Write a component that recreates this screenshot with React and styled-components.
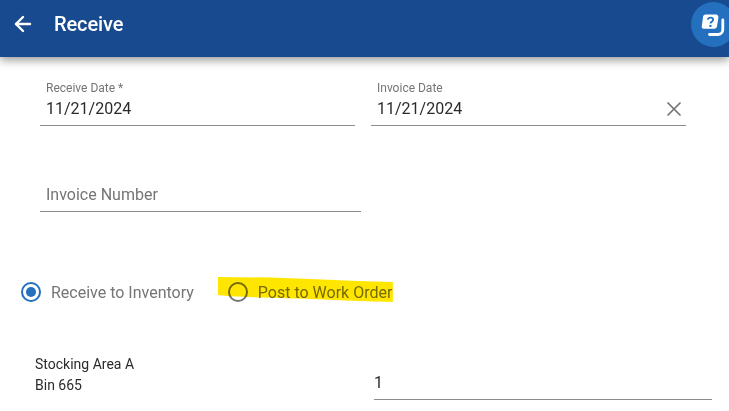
import React from "react";
import styled, { createGlobalStyle } from "styled-components";
import { ArrowLeft, X } from "lucide-react";

const Global = createGlobalStyle`
  html, body { margin: 0; padding: 0; background: #fff; width: 729px; height: 411px; overflow: hidden; }
  * { box-sizing: border-box; }
  body { font-family: Roboto, "Liberation Sans", sans-serif; }
`;

const Page = styled.div`
  width: 729px;
  height: 411px;
  overflow: hidden;
  display: flex;
  flex-direction: column;
`;

const Header = styled.header`
  position: relative;
  flex: none;
  height: 57px;
  background: #174a8f;
  box-shadow: 0 3px 9px rgba(0, 0, 0, 0.42);
  display: flex;
  align-items: center;
  padding: 0 0 9px 11px;
  color: #fff;
`;

const BackIcon = styled(ArrowLeft)`
  width: 24px;
  height: 24px;
  stroke-width: 2.4;
  margin-right: 19px;
`;

const Title = styled.h1`
  margin: 0;
  font-size: 20px;
  font-weight: 500;
  line-height: 24px;
  letter-spacing: -0.1px;
`;

const HelpBubble = styled.div`
  position: absolute;
  left: 691px;
  top: 2px;
  width: 45px;
  height: 45px;
  border-radius: 50%;
  background: #2470bf;
  display: flex;
  align-items: center;
  padding-left: 9px;
`;

const Main = styled.main`
  flex: 1;
  display: flex;
  flex-direction: column;
`;

const DateRow = styled.div`
  display: flex;
  gap: 16px;
  padding: 23px 0 0 40px;
`;

const Field = styled.div`
  position: relative;
  width: ${(p) => p.$width}px;
  height: ${(p) => p.$height || 46}px;
  border-bottom: 1px solid #8c8c8c;
  padding: 0 6px;
  display: flex;
  flex-direction: column;
  justify-content: flex-end;
`;

const SmallLabel = styled.label`
  font-size: 12px;
  line-height: 14px;
  color: #757575;
  margin-bottom: 2px;
`;

const Value = styled.div`
  font-size: 16px;
  line-height: 24px;
  color: #2b2b2b;
  margin-bottom: 4px;
`;

const Placeholder = styled.div`
  font-size: 16px;
  line-height: 24px;
  color: #757575;
  margin-bottom: 4px;
`;

const ClearIcon = styled(X)`
  position: absolute;
  right: 0px;
  bottom: 4px;
  width: 24px;
  height: 24px;
  color: #757575;
  stroke-width: 1.7;
`;

const InvoiceRow = styled.div`
  padding: 40px 0 0 40px;
`;

const RadioRow = styled.div`
  display: flex;
  align-items: center;
  padding: 68px 0 0 21px;
`;

const RadioOption = styled.div`
  position: relative;
  display: flex;
  align-items: center;
  gap: 10px;
  height: 24px;
  margin-right: ${(p) => p.$gap || 0}px;
  font-size: 16px;
  color: #757575;
`;

const RadioCircle = styled.span`
  width: 20px;
  height: 20px;
  border-radius: 50%;
  border: 2px solid ${(p) => (p.$on ? "#2470bf" : "#757575")};
  display: flex;
  align-items: center;
  justify-content: center;
  &::after {
    content: "";
    width: 10px;
    height: 10px;
    border-radius: 50%;
    background: ${(p) => (p.$on ? "#2470bf" : "transparent")};
  }
`;

const Highlight = styled.span`
  position: absolute;
  left: -10px;
  top: -3px;
  width: 175px;
  height: 26px;
  background: #ffe600;
  mix-blend-mode: multiply;
  clip-path: polygon(0 0, 30% 2%, 53% 8%, 80% 15%, 100% 19%, 100% 96%, 80% 92%, 53% 85%, 30% 80%, 7% 74%, 0 69%);
`;

const StockRow = styled.div`
  display: flex;
  padding: 50px 0 0 35px;
`;

const StockInfo = styled.div`
  width: 339px;
  font-size: 14px;
  line-height: 21px;
  color: #2b2b2b;
`;

const QtyField = styled.div`
  width: 338px;
  height: 46px;
  border-bottom: 1px solid #8c8c8c;
  font-size: 16px;
  line-height: 24px;
  color: #2b2b2b;
  display: flex;
  align-items: flex-end;
  padding-bottom: 4px;
`;

export default function App() {
  return (
    <Page>
      <Global />
      <Header>
        <BackIcon />
        <Title>Receive</Title>
        <HelpBubble>
          <svg width="26" height="26" viewBox="0 0 26 26">
            <path d="M5.5 2.5h10.5a2.5 2.5 0 0 1 2.4 3l-1.4 9a2.6 2.6 0 0 1-2.5 2.2H4a2.2 2.2 0 0 1-2.2-2.6l1.4-10a2.4 2.4 0 0 1 2.3-1.6z" fill="#fff" />
            <path d="M7.8 7.6c.3-1.3 1.4-2 2.7-2 1.5 0 2.6.8 2.6 2.1 0 1.2-.8 1.7-1.6 2.2-.6.4-.9.8-.9 1.5" fill="none" stroke="#2470bf" strokeWidth="1.9" />
            <circle cx="10.4" cy="13.9" r="1.2" fill="#2470bf" />
            <path d="M22.8 8v9.5a5 5 0 0 1-5 5H9.5" fill="none" stroke="#fff" strokeWidth="2.8" strokeLinecap="round" />
          </svg>
        </HelpBubble>
      </Header>
      <Main>
        <DateRow>
          <Field $width={315}>
            <SmallLabel>Receive Date *</SmallLabel>
            <Value>11/21/2024</Value>
          </Field>
          <Field $width={315}>
            <SmallLabel>Invoice Date</SmallLabel>
            <Value>11/21/2024</Value>
            <ClearIcon />
          </Field>
        </DateRow>
        <InvoiceRow>
          <Field $width={321}>
            <Placeholder>Invoice Number</Placeholder>
          </Field>
        </InvoiceRow>
        <RadioRow>
          <RadioOption $gap={34}>
            <RadioCircle $on />
            Receive to Inventory
          </RadioOption>
          <RadioOption>
            <RadioCircle />
            Post to Work Order
            <Highlight />
          </RadioOption>
        </RadioRow>
        <StockRow>
          <StockInfo>
            Stocking Area A
            <br />
            Bin 665
          </StockInfo>
          <QtyField>1</QtyField>
        </StockRow>
      </Main>
    </Page>
  );
}
